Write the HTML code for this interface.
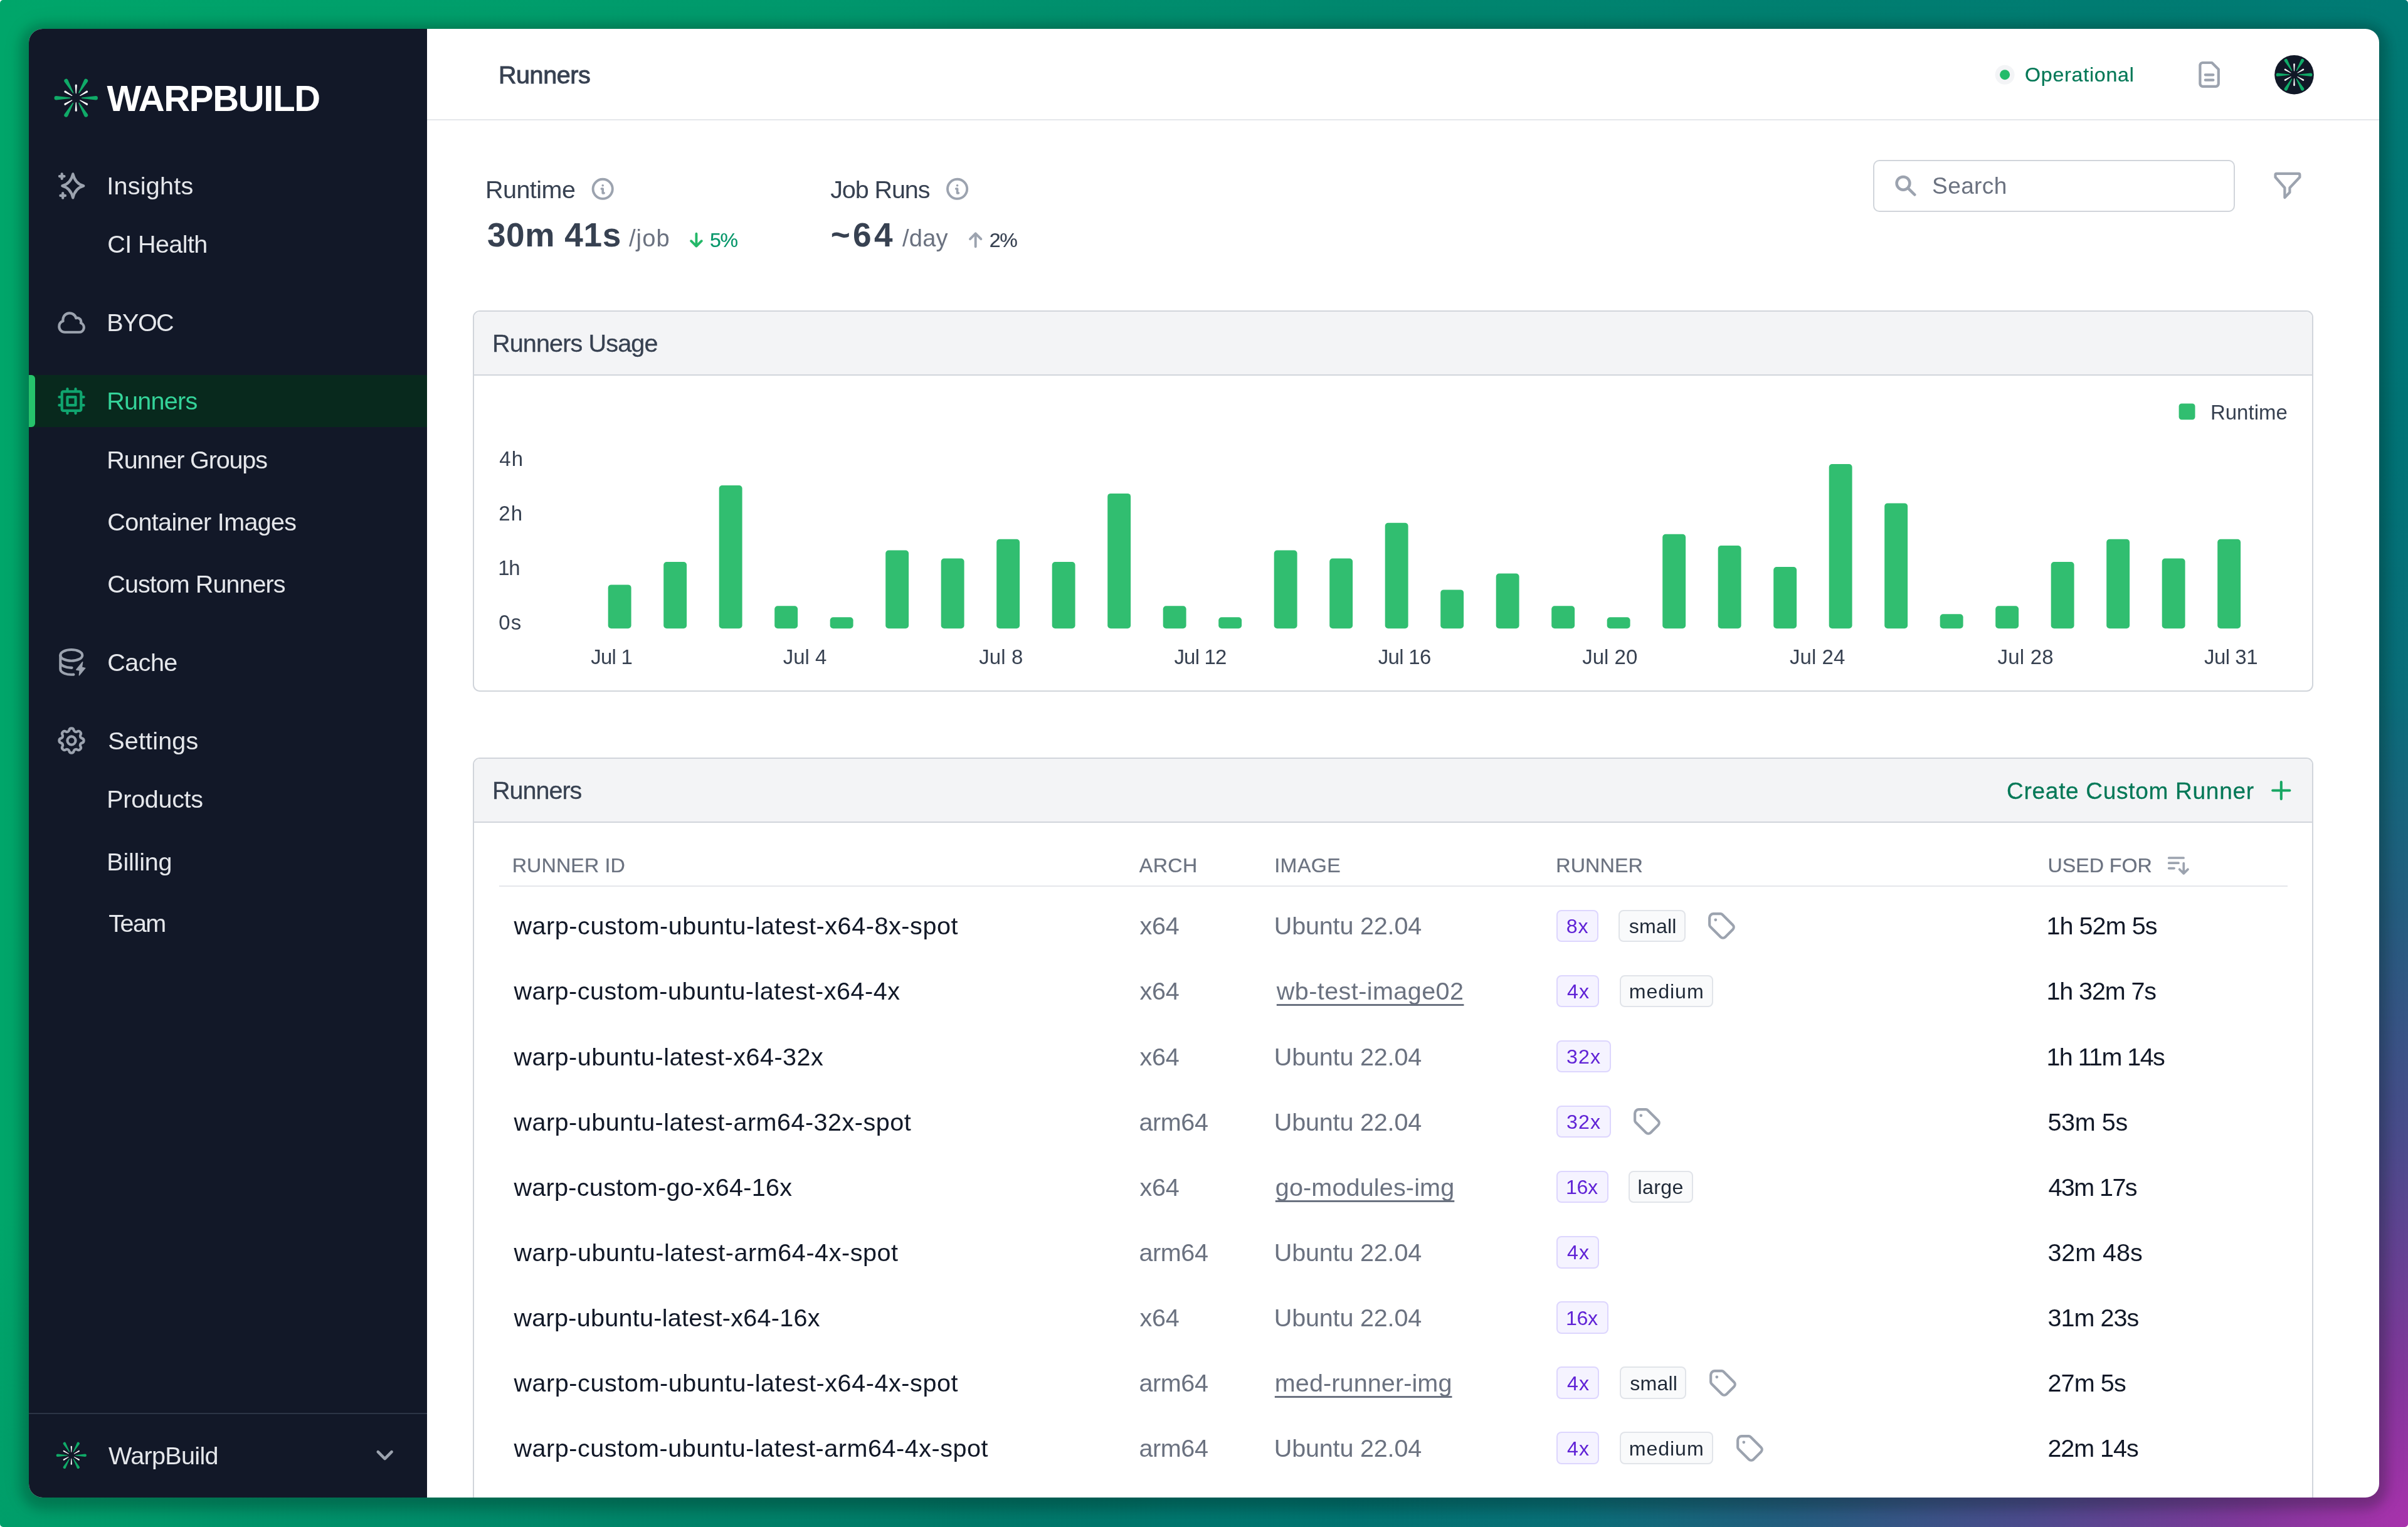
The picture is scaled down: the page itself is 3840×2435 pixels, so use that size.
<!DOCTYPE html>
<html lang="en"><head><meta charset="utf-8"><title>WarpBuild – Runners</title>
<style>
html,body{margin:0;padding:0}
html{width:3840px;height:2435px;overflow:hidden;background:#fff}
body{width:3840px;height:2435px;position:relative;overflow:hidden;font-family:"Liberation Sans",sans-serif;background:#fff}
#bgd{position:absolute;left:0;top:0;width:3840px;height:2435px;border-radius:5px;background:
radial-gradient(2400px circle at 100% 100%, #a832ac 0px, rgb(130,55,155) 243px, rgb(75,75,140) 609px, rgba(40,90,128,.92) 974px, rgba(15,103,125,.62) 1344px, rgba(0,105,120,.35) 1800px, rgba(0,110,118,0) 2400px),
radial-gradient(1900px 1000px ellipse at 40% 104%, rgba(0,100,100,.6) 0%, rgba(0,108,102,.38) 45%, rgba(0,120,105,0) 100%),
linear-gradient(to right,#00a66a 0%,#009a6c 30%,#00886e 55%,#007d71 80%,#007a74 100%);}
.a{position:absolute}
.t{position:absolute;white-space:nowrap;margin:0;padding:0}
#win{position:absolute;left:46px;top:46px;width:3748px;height:2342px;border-radius:22px;overflow:hidden;background:#fff;
box-shadow:0 6px 16px 13px rgba(0,25,20,.2),0 4px 40px 4px rgba(0,25,20,.12)}
#pg{position:absolute;left:-46px;top:-46px;width:3840px;height:2435px;will-change:transform}
#side{left:46px;top:46px;width:635px;height:2342px;background:#121828}
#act{left:46px;top:598px;width:635px;height:82.7px;background:#08291d}
#bar{left:46px;top:598px;width:10.4px;height:82.7px;background:#26c36b;border-radius:0 6px 6px 0}
#sep{left:46px;top:2253px;width:635px;height:2.4px;background:#2b3445}
#hdr{left:681px;top:189.8px;width:3113px;height:2.2px;background:#e5e7eb}
.card{border:2.4px solid #d1d5db;border-radius:11px;box-sizing:border-box;background:#fff;overflow:hidden}
.ch{position:absolute;left:0;top:0;right:0;height:99.4px;background:#f3f4f6;border-bottom:2.4px solid #d1d5db}
#c1{left:754.4px;top:495.2px;width:2934.4px;height:607.6px}
#c2{left:754.4px;top:1208.4px;width:2934.4px;height:1300px}
#srch{left:2987.2px;top:254.9px;width:577.2px;height:82.8px;border:2.4px solid #d1d5db;border-radius:10px;box-sizing:border-box}
#thl{left:795.8px;top:1412px;width:2852px;height:2px;background:#e5e7eb}
.bd{height:51.5px;border-radius:8px;box-sizing:border-box;border:2.2px solid}
.bp{background:#f5f3ff;border-color:#ddd6fe}
.bg{background:#f9fafb;border-color:#e1e4e9}
svg{overflow:visible}
.ic{fill:none;stroke:#9ca3af;stroke-linecap:round;stroke-linejoin:round}
</style></head>
<body>
<svg width="0" height="0" style="position:absolute"><defs>
<g id="tag" fill="none" stroke="#9ca3af" stroke-width="1.95" stroke-linecap="round" stroke-linejoin="round"><circle cx="7.5" cy="7.5" r=".6" fill="#9ca3af" stroke-width="1"/><path d="M3 6v5.172a2 2 0 0 0 .586 1.414l7.71 7.71a2.41 2.41 0 0 0 3.408 0l5.592 -5.592a2.41 2.41 0 0 0 0 -3.408l-7.71 -7.71a2 2 0 0 0 -1.414 -.586h-5.172a3 3 0 0 0 -3 3z"/></g>
<g id="logo"><path transform="rotate(0)" fill="#10aa68" d="M9.5 -0.8L31.50 -3.2A3.2 3.2 0 0 1 31.50 3.2L9.5 0.8A0.8 0.8 0 0 1 9.5 -0.8Z"/><path transform="rotate(60)" fill="#10aa68" d="M9.5 -0.8L31.50 -3.2A3.2 3.2 0 0 1 31.50 3.2L9.5 0.8A0.8 0.8 0 0 1 9.5 -0.8Z"/><path transform="rotate(120)" fill="#10aa68" d="M9.5 -0.8L31.50 -3.2A3.2 3.2 0 0 1 31.50 3.2L9.5 0.8A0.8 0.8 0 0 1 9.5 -0.8Z"/><path transform="rotate(180)" fill="#10aa68" d="M9.5 -0.8L31.50 -3.2A3.2 3.2 0 0 1 31.50 3.2L9.5 0.8A0.8 0.8 0 0 1 9.5 -0.8Z"/><path transform="rotate(240)" fill="#10aa68" d="M9.5 -0.8L31.50 -3.2A3.2 3.2 0 0 1 31.50 3.2L9.5 0.8A0.8 0.8 0 0 1 9.5 -0.8Z"/><path transform="rotate(300)" fill="#10aa68" d="M9.5 -0.8L31.50 -3.2A3.2 3.2 0 0 1 31.50 3.2L9.5 0.8A0.8 0.8 0 0 1 9.5 -0.8Z"/><path transform="rotate(30)" fill="#ffffff" d="M7.5 -0.6L20.00 -1.6A1.6 1.6 0 0 1 20.00 1.6L7.5 0.6A0.6 0.6 0 0 1 7.5 -0.6Z"/><path transform="rotate(90)" fill="#ffffff" d="M7.5 -0.6L20.00 -1.6A1.6 1.6 0 0 1 20.00 1.6L7.5 0.6A0.6 0.6 0 0 1 7.5 -0.6Z"/><path transform="rotate(150)" fill="#ffffff" d="M7.5 -0.6L20.00 -1.6A1.6 1.6 0 0 1 20.00 1.6L7.5 0.6A0.6 0.6 0 0 1 7.5 -0.6Z"/><path transform="rotate(210)" fill="#ffffff" d="M7.5 -0.6L20.00 -1.6A1.6 1.6 0 0 1 20.00 1.6L7.5 0.6A0.6 0.6 0 0 1 7.5 -0.6Z"/><path transform="rotate(270)" fill="#ffffff" d="M7.5 -0.6L20.00 -1.6A1.6 1.6 0 0 1 20.00 1.6L7.5 0.6A0.6 0.6 0 0 1 7.5 -0.6Z"/><path transform="rotate(330)" fill="#ffffff" d="M7.5 -0.6L20.00 -1.6A1.6 1.6 0 0 1 20.00 1.6L7.5 0.6A0.6 0.6 0 0 1 7.5 -0.6Z"/></g>
<g id="info" fill="none" stroke="#9ca3af" stroke-width="3.9" stroke-linecap="round" stroke-linejoin="round"><circle cx="0" cy="0" r="15.6"/><path d="M0 -5.6h.02M-1.9 -.3h1.9v6.9h1.9" stroke-width="3.6"/></g>
</defs></svg>
<div id="bgd"></div>
<div id="win"><div id="pg">
<div class="a" id="side"></div>
<div class="a" id="act"></div><div class="a" id="bar"></div>
<div class="a" id="sep"></div>
<div class="a" id="hdr"></div>
<div class="a card" id="c1"><div class="ch"></div></div>
<div class="a card" id="c2"><div class="ch"></div></div>
<div class="a" id="srch"></div>
<div class="a" id="thl"></div>
<svg class="a" style="left:0;top:0" width="3840" height="1110" viewBox="0 0 3840 1110"><g fill="#31be70"><rect x="969.7" y="932.4" width="36.9" height="69.8" rx="5"/><rect x="1058.2" y="896.1" width="36.9" height="106.1" rx="5"/><rect x="1146.7" y="774.0" width="36.9" height="228.2" rx="5"/><rect x="1235.2" y="966.3" width="36.9" height="35.9" rx="5"/><rect x="1323.7" y="984.3" width="36.9" height="17.9" rx="5"/><rect x="1412.2" y="877.6" width="36.9" height="124.6" rx="5"/><rect x="1500.7" y="890.6" width="36.9" height="111.6" rx="5"/><rect x="1589.2" y="859.7" width="36.9" height="142.5" rx="5"/><rect x="1677.7" y="896.1" width="36.9" height="106.1" rx="5"/><rect x="1766.2" y="786.9" width="36.9" height="215.3" rx="5"/><rect x="1854.7" y="966.3" width="36.9" height="35.9" rx="5"/><rect x="1943.2" y="984.3" width="36.9" height="17.9" rx="5"/><rect x="2031.7" y="877.6" width="36.9" height="124.6" rx="5"/><rect x="2120.2" y="890.6" width="36.9" height="111.6" rx="5"/><rect x="2208.7" y="833.8" width="36.9" height="168.4" rx="5"/><rect x="2297.2" y="940.4" width="36.9" height="61.8" rx="5"/><rect x="2385.7" y="914.5" width="36.9" height="87.7" rx="5"/><rect x="2474.2" y="966.3" width="36.9" height="35.9" rx="5"/><rect x="2562.7" y="984.3" width="36.9" height="17.9" rx="5"/><rect x="2651.2" y="851.7" width="36.9" height="150.5" rx="5"/><rect x="2739.7" y="870.1" width="36.9" height="132.1" rx="5"/><rect x="2828.2" y="904.0" width="36.9" height="98.2" rx="5"/><rect x="2916.7" y="740.1" width="36.9" height="262.1" rx="5"/><rect x="3005.2" y="802.4" width="36.9" height="199.8" rx="5"/><rect x="3093.7" y="979.3" width="36.9" height="22.9" rx="5"/><rect x="3182.2" y="966.3" width="36.9" height="35.9" rx="5"/><rect x="3270.7" y="896.1" width="36.9" height="106.1" rx="5"/><rect x="3359.2" y="859.7" width="36.9" height="142.5" rx="5"/><rect x="3447.7" y="890.6" width="36.9" height="111.6" rx="5"/><rect x="3536.2" y="859.7" width="36.9" height="142.5" rx="5"/></g></svg>
<svg class="a" style="left:0;top:0" width="3840" height="2435" viewBox="0 0 3840 2435">
<!-- logo -->
<g transform="translate(121.25 156.2)"><use href="#logo"/></g>
<g transform="translate(113.8 2320.8) scale(.696)"><use href="#logo"/></g>
<circle cx="3658.5" cy="119.2" r="31.3" fill="#111827"/>
<g transform="translate(3658.5 119.2) scale(.833)"><use href="#logo"/></g>
<!-- sparkles -->
<g class="ic" stroke-width="4.2" transform="translate(116.3 296.4)"><path d="M0 -19Q3.6 -3.6 17 0Q3.6 3.6 0 19Q-3.6 3.6 -17 0Q-3.6 -3.6 0 -19Z"/><path d="M-17.6 -19.1v7.6M-21.4 -15.3h7.6M-16.1 11.7v7.6M-19.9 15.5h7.6"/></g>
<!-- cloud -->
<g class="ic" stroke-width="2.07" transform="translate(89.74 490.29) scale(2.025)"><path d="M2.25 15a4.5 4.5 0 0 0 4.5 4.5H18a3.75 3.75 0 0 0 1.332-7.257 3 3 0 0 0-3.758-3.848 5.25 5.25 0 0 0-10.233 2.33A4.502 4.502 0 0 0 2.25 15Z"/></g>
<!-- cpu -->
<g class="ic" style="stroke:#10a56f" stroke-width="1.93" transform="translate(87.84 613.44) scale(2.18)"><path d="M5 6a1 1 0 0 1 1 -1h12a1 1 0 0 1 1 1v12a1 1 0 0 1 -1 1h-12a1 1 0 0 1 -1 -1zM9 9h6v6h-6zM3 9h2M3 15h2M9 3v2M15 3v2M21 9h-2M21 15h-2M15 21v-2M9 21v-2"/></g>
<!-- cache -->
<g class="ic" stroke-width="4.1"><ellipse cx="113.8" cy="1044.9" rx="17.5" ry="8.85"/><path d="M96.3 1044.9V1067A17.5 8.8 0 0 0 117.4 1075.6M96.3 1056A17.5 8.9 0 0 0 114.6 1064.9"/><path d="M131.7 1055.6L121.7 1068L127.2 1069L126.3 1076.9L135.8 1065.4L130.4 1064.2Z" fill="#9ca3af" stroke-width="1.4"/></g>
<!-- settings -->
<g class="ic" stroke-width="1.93" transform="translate(87.84 1154.84) scale(2.18)"><path d="M10.325 4.317c.426 -1.756 2.924 -1.756 3.35 0a1.724 1.724 0 0 0 2.573 1.066c1.543 -.94 3.31 .826 2.37 2.37a1.724 1.724 0 0 0 1.065 2.572c1.756 .426 1.756 2.924 0 3.35a1.724 1.724 0 0 0 -1.066 2.573c.94 1.543 -.826 3.31 -2.37 2.37a1.724 1.724 0 0 0 -2.572 1.065c-.426 1.756 -2.924 1.756 -3.35 0a1.724 1.724 0 0 0 -2.573 -1.066c-1.543 .94 -3.31 -.826 -2.37 -2.37a1.724 1.724 0 0 0 -1.065 -2.572c-1.756 -.426 -1.756 -2.924 0 -3.35a1.724 1.724 0 0 0 1.066 -2.573c-.94 -1.543 .826 -3.31 2.37 -2.37c1 .608 2.296 .07 2.572 -1.065z"/><circle cx="12" cy="12" r="3"/></g>
<!-- chevron -->
<path class="ic" stroke-width="4.6" d="M602.8 2315.2l10.9 10.9l10.9 -10.9"/>
<!-- status -->
<circle cx="3197.1" cy="119.2" r="15.5" fill="#f3f4f6"/><circle cx="3197.1" cy="119.2" r="8" fill="#23bb6a"/>
<!-- doc -->
<g class="ic" stroke-width="2" transform="translate(3497.9 93.7) scale(2.1)"><path d="M14 3H7a2 2 0 0 0 -2 2v14a2 2 0 0 0 2 2h10a2 2 0 0 0 2 -2V8zM9 12.2h6M9 16.2h6"/></g>
<!-- info -->
<g transform="translate(961.2 301.3)"><use href="#info"/></g>
<g transform="translate(1526.6 301.3)"><use href="#info"/></g>
<!-- arrows -->
<path fill="none" stroke="#25b869" stroke-width="3.9" stroke-linecap="round" stroke-linejoin="round" d="M1110.45 372.8v19.7M1102.1 384.2l8.35 8.35l8.35 -8.35"/>
<path fill="none" stroke="#9ca3af" stroke-width="3.9" stroke-linecap="round" stroke-linejoin="round" d="M1555.7 393.3v-20.9M1547.0 381.1l8.7 -8.7l8.7 8.7"/>
<!-- search -->
<g class="ic" stroke-width="4.5"><circle cx="3035" cy="292.3" r="10.4"/><path d="M3043 300.3l10.3 10.2"/></g>
<!-- filter -->
<path class="ic" stroke-width="4.2" d="M3630.5 276.9h34.9a2 2 0 0 1 2 2v3.6l-16 17v7.2l-8 8.3v-15.5l-14.9 -17v-3.6a2 2 0 0 1 2 -2z"/>
<!-- legend -->
<rect x="3474.6" y="643.4" width="25.9" height="25.9" rx="4.5" fill="#31be70"/>
<!-- plus -->
<path fill="none" stroke="#17a663" stroke-width="4.1" stroke-linecap="round" d="M3637.8 1247v27.1M3624.2 1260.5h27.2"/>
<!-- sort -->
<g class="ic" stroke-width="3.7"><path d="M3458.7 1368h23.4M3458.7 1376.2h15.3M3458.7 1384.6h8.4M3482.3 1376.5v15.5M3475.6 1386.2l6.7 6.7l6.7 -6.7"/></g>
</svg>
<div class="a bd bp" style="left:2482.4px;top:1450.5px;width:66.5px"></div>
<div class="a bd bg" style="left:2581.3px;top:1450.5px;width:106.3px"></div>
<svg class="a" style="left:2724.3px;top:1454.8px" width="42.9" height="42.9" viewBox="2 2 20 20"><use href="#tag"/></svg>
<div class="a bd bp" style="left:2482.4px;top:1554.6px;width:68.1px"></div>
<div class="a bd bg" style="left:2582.9px;top:1554.6px;width:149.0px"></div>
<div class="a bd bp" style="left:2482.4px;top:1658.8px;width:86.2px"></div>
<div class="a bd bp" style="left:2482.4px;top:1762.8px;width:86.2px"></div>
<svg class="a" style="left:2605.3px;top:1767.1px" width="42.9" height="42.9" viewBox="2 2 20 20"><use href="#tag"/></svg>
<div class="a bd bp" style="left:2482.4px;top:1866.9px;width:82.2px"></div>
<div class="a bd bg" style="left:2597.0px;top:1866.9px;width:103.0px"></div>
<div class="a bd bp" style="left:2482.4px;top:1971.0px;width:68.1px"></div>
<div class="a bd bp" style="left:2482.4px;top:2075.1px;width:82.2px"></div>
<div class="a bd bp" style="left:2482.4px;top:2179.2px;width:68.1px"></div>
<div class="a bd bg" style="left:2582.9px;top:2179.2px;width:106.3px"></div>
<svg class="a" style="left:2725.9px;top:2183.6px" width="42.9" height="42.9" viewBox="2 2 20 20"><use href="#tag"/></svg>
<div class="a bd bp" style="left:2482.4px;top:2283.3px;width:68.1px"></div>
<div class="a bd bg" style="left:2582.9px;top:2283.3px;width:149.0px"></div>
<svg class="a" style="left:2768.6px;top:2287.7px" width="42.9" height="42.9" viewBox="2 2 20 20"><use href="#tag"/></svg>
<div class="t" style="left:170.4px;top:119.8px;font-size:57.99px;line-height:75px;color:#ffffff;letter-spacing:-1.29px;font-weight:700;">WARPBUILD</div>
<div class="t" style="left:170.3px;top:271.2px;font-size:39.55px;line-height:51px;color:#e5e7eb;letter-spacing:0.24px;">Insights</div>
<div class="t" style="left:171.3px;top:363.9px;font-size:39.55px;line-height:51px;color:#e5e7eb;letter-spacing:-0.61px;">CI Health</div>
<div class="t" style="left:170.3px;top:488.8px;font-size:39.55px;line-height:51px;color:#e5e7eb;letter-spacing:-1.58px;">BYOC</div>
<div class="t" style="left:170.3px;top:613.9px;font-size:39.55px;line-height:51px;color:#34d399;letter-spacing:-0.75px;">Runners</div>
<div class="t" style="left:170.3px;top:708.0px;font-size:39.55px;line-height:51px;color:#e5e7eb;letter-spacing:-1.14px;">Runner Groups</div>
<div class="t" style="left:171.3px;top:807.4px;font-size:39.55px;line-height:51px;color:#e5e7eb;letter-spacing:-0.69px;">Container Images</div>
<div class="t" style="left:171.3px;top:906.1px;font-size:39.55px;line-height:51px;color:#e5e7eb;letter-spacing:-0.96px;">Custom Runners</div>
<div class="t" style="left:171.3px;top:1030.7px;font-size:39.55px;line-height:51px;color:#e5e7eb;letter-spacing:-0.58px;">Cache</div>
<div class="t" style="left:172.3px;top:1155.8px;font-size:39.55px;line-height:51px;color:#e5e7eb;letter-spacing:0.15px;">Settings</div>
<div class="t" style="left:170.3px;top:1249.3px;font-size:39.55px;line-height:51px;color:#e5e7eb;letter-spacing:-0.33px;">Products</div>
<div class="t" style="left:170.3px;top:1348.6px;font-size:39.55px;line-height:51px;color:#e5e7eb;letter-spacing:-0.22px;">Billing</div>
<div class="t" style="left:173.3px;top:1447.0px;font-size:39.55px;line-height:51px;color:#e5e7eb;letter-spacing:-1.58px;">Team</div>
<div class="t" style="left:173.0px;top:2295.8px;font-size:39.55px;line-height:51px;color:#e5e7eb;letter-spacing:-0.68px;">WarpBuild</div>
<div class="t" style="left:795.0px;top:93.9px;font-size:39.55px;line-height:51px;color:#374151;letter-spacing:-0.47px;-webkit-text-stroke:0.95px #374151;">Runners</div>
<div class="t" style="left:3229.0px;top:98.2px;font-size:32.14px;line-height:42px;color:#047857;letter-spacing:0.78px;-webkit-text-stroke:0.22px #047857;">Operational</div>
<div class="t" style="left:773.9px;top:276.6px;font-size:39.55px;line-height:51px;color:#374151;letter-spacing:-0.53px;">Runtime</div>
<div class="t" style="left:776.9px;top:340.1px;font-size:53.15px;line-height:69px;color:#374151;letter-spacing:0.59px;font-weight:700;">30m 41s</div>
<div class="t" style="left:1002.9px;top:354.8px;font-size:38.11px;line-height:50px;color:#6b7280;letter-spacing:1.12px;">/job</div>
<div class="t" style="left:1132.0px;top:361.5px;font-size:32.14px;line-height:42px;color:#059669;letter-spacing:-1.29px;-webkit-text-stroke:0.22px #059669;">5%</div>
<div class="t" style="left:1324.2px;top:276.6px;font-size:39.55px;line-height:51px;color:#374151;letter-spacing:-1.11px;">Job Runs</div>
<div class="t" style="left:1324.7px;top:340.1px;font-size:53.15px;line-height:69px;color:#374151;letter-spacing:4.31px;font-weight:700;">~64</div>
<div class="t" style="left:1438.9px;top:354.8px;font-size:38.11px;line-height:50px;color:#6b7280;letter-spacing:0.24px;">/day</div>
<div class="t" style="left:1577.8px;top:361.5px;font-size:32.14px;line-height:42px;color:#374151;letter-spacing:-1.29px;-webkit-text-stroke:0.22px #374151;">2%</div>
<div class="t" style="left:3081.1px;top:272.4px;font-size:37.08px;line-height:48px;color:#6b7280;letter-spacing:0.35px;">Search</div>
<div class="t" style="left:785.0px;top:521.6px;font-size:39.55px;line-height:51px;color:#374151;letter-spacing:-0.86px;-webkit-text-stroke:0.28px #374151;">Runners Usage</div>
<div class="t" style="left:3524.9px;top:635.9px;font-size:32.96px;line-height:43px;color:#374151;letter-spacing:0.04px;">Runtime</div>
<div class="t" style="left:796.3px;top:710.2px;font-size:32.96px;line-height:43px;color:#374151;letter-spacing:1.07px;">4h</div>
<div class="t" style="left:795.3px;top:796.9px;font-size:32.96px;line-height:43px;color:#374151;letter-spacing:1.17px;">2h</div>
<div class="t" style="left:794.3px;top:884.1px;font-size:32.96px;line-height:43px;color:#374151;letter-spacing:-1.32px;">1h</div>
<div class="t" style="left:795.3px;top:971.3px;font-size:32.96px;line-height:43px;color:#374151;letter-spacing:1.17px;">0s</div>
<div class="t" style="left:942.3px;top:1025.9px;font-size:32.96px;line-height:43px;color:#374151;letter-spacing:-0.75px;">Jul 1</div>
<div class="t" style="left:1248.8px;top:1025.9px;font-size:32.96px;line-height:43px;color:#374151;letter-spacing:-0.02px;">Jul 4</div>
<div class="t" style="left:1561.2px;top:1025.9px;font-size:32.96px;line-height:43px;color:#374151;letter-spacing:0.13px;">Jul 8</div>
<div class="t" style="left:1872.4px;top:1025.9px;font-size:32.96px;line-height:43px;color:#374151;letter-spacing:-0.78px;">Jul 12</div>
<div class="t" style="left:2197.8px;top:1025.9px;font-size:32.96px;line-height:43px;color:#374151;letter-spacing:-0.68px;">Jul 16</div>
<div class="t" style="left:2523.2px;top:1025.9px;font-size:32.96px;line-height:43px;color:#374151;letter-spacing:0.02px;">Jul 20</div>
<div class="t" style="left:2854.1px;top:1025.9px;font-size:32.96px;line-height:43px;color:#374151;letter-spacing:0.04px;">Jul 24</div>
<div class="t" style="left:3185.5px;top:1025.9px;font-size:32.96px;line-height:43px;color:#374151;letter-spacing:0.22px;">Jul 28</div>
<div class="t" style="left:3514.9px;top:1025.9px;font-size:32.96px;line-height:43px;color:#374151;letter-spacing:-0.46px;">Jul 31</div>
<div class="t" style="left:785.0px;top:1235.4px;font-size:39.55px;line-height:51px;color:#374151;letter-spacing:-1.03px;-webkit-text-stroke:0.28px #374151;">Runners</div>
<div class="t" style="left:3200.1px;top:1237.0px;font-size:37.08px;line-height:48px;color:#047857;letter-spacing:0.67px;-webkit-text-stroke:0.26px #047857;">Create Custom Runner</div>
<div class="t" style="left:816.7px;top:1359.2px;font-size:32.24px;line-height:42px;color:#6b7280;letter-spacing:0.14px;-webkit-text-stroke:0.23px #6b7280;">RUNNER ID</div>
<div class="t" style="left:1816.8px;top:1359.2px;font-size:32.24px;line-height:42px;color:#6b7280;letter-spacing:0.35px;-webkit-text-stroke:0.23px #6b7280;">ARCH</div>
<div class="t" style="left:2032.2px;top:1359.2px;font-size:32.24px;line-height:42px;color:#6b7280;letter-spacing:0.45px;-webkit-text-stroke:0.23px #6b7280;">IMAGE</div>
<div class="t" style="left:2481.2px;top:1359.2px;font-size:32.24px;line-height:42px;color:#6b7280;letter-spacing:0.16px;-webkit-text-stroke:0.23px #6b7280;">RUNNER</div>
<div class="t" style="left:3265.5px;top:1359.2px;font-size:32.24px;line-height:42px;color:#6b7280;letter-spacing:-0.03px;-webkit-text-stroke:0.23px #6b7280;">USED FOR</div>
<div class="t" style="left:819.4px;top:1451.3px;font-size:39.55px;line-height:51px;color:#111827;letter-spacing:0.56px;">warp-custom-ubuntu-latest-x64-8x-spot</div>
<div class="t" style="left:1817.4px;top:1451.3px;font-size:39.55px;line-height:51px;color:#6b7280;letter-spacing:-0.23px;">x64</div>
<div class="t" style="left:2031.8px;top:1451.3px;font-size:39.55px;line-height:51px;color:#6b7280;letter-spacing:-0.19px;">Ubuntu 22.04</div>
<div class="t" style="left:3263.4px;top:1451.3px;font-size:39.55px;line-height:51px;color:#111827;letter-spacing:-0.94px;">1h 52m 5s</div>
<div class="t" style="left:2497.8px;top:1455.9px;font-size:32.14px;line-height:42px;color:#6023d6;letter-spacing:0.73px;">8x</div>
<div class="t" style="left:2597.8px;top:1455.9px;font-size:32.14px;line-height:42px;color:#1f2937;letter-spacing:0.14px;">small</div>
<div class="t" style="left:819.4px;top:1555.4px;font-size:39.55px;line-height:51px;color:#111827;letter-spacing:0.50px;">warp-custom-ubuntu-latest-x64-4x</div>
<div class="t" style="left:1817.4px;top:1555.4px;font-size:39.55px;line-height:51px;color:#6b7280;letter-spacing:-0.23px;">x64</div>
<div class="t" style="left:2035.8px;top:1555.4px;font-size:39.55px;line-height:51px;color:#6b7280;letter-spacing:0.42px;text-decoration:underline;text-decoration-thickness:3px;text-underline-offset:7px;text-decoration-skip-ink:none;">wb-test-image02</div>
<div class="t" style="left:3263.4px;top:1555.4px;font-size:39.55px;line-height:51px;color:#111827;letter-spacing:-1.12px;">1h 32m 7s</div>
<div class="t" style="left:2499.0px;top:1560.0px;font-size:32.14px;line-height:42px;color:#6023d6;letter-spacing:1.13px;">4x</div>
<div class="t" style="left:2597.8px;top:1560.0px;font-size:32.14px;line-height:42px;color:#1f2937;letter-spacing:0.92px;">medium</div>
<div class="t" style="left:819.4px;top:1659.5px;font-size:39.55px;line-height:51px;color:#111827;letter-spacing:0.48px;">warp-ubuntu-latest-x64-32x</div>
<div class="t" style="left:1817.4px;top:1659.5px;font-size:39.55px;line-height:51px;color:#6b7280;letter-spacing:-0.23px;">x64</div>
<div class="t" style="left:2031.8px;top:1659.5px;font-size:39.55px;line-height:51px;color:#6b7280;letter-spacing:-0.19px;">Ubuntu 22.04</div>
<div class="t" style="left:3263.4px;top:1659.5px;font-size:39.55px;line-height:51px;color:#111827;letter-spacing:-1.58px;">1h 11m 14s</div>
<div class="t" style="left:2498.0px;top:1664.1px;font-size:32.14px;line-height:42px;color:#6023d6;letter-spacing:1.13px;">32x</div>
<div class="t" style="left:819.4px;top:1763.6px;font-size:39.55px;line-height:51px;color:#111827;letter-spacing:0.49px;">warp-ubuntu-latest-arm64-32x-spot</div>
<div class="t" style="left:1816.4px;top:1763.6px;font-size:39.55px;line-height:51px;color:#6b7280;letter-spacing:-0.38px;">arm64</div>
<div class="t" style="left:2031.8px;top:1763.6px;font-size:39.55px;line-height:51px;color:#6b7280;letter-spacing:-0.19px;">Ubuntu 22.04</div>
<div class="t" style="left:3265.4px;top:1763.6px;font-size:39.55px;line-height:51px;color:#111827;letter-spacing:-0.36px;">53m 5s</div>
<div class="t" style="left:2498.0px;top:1768.2px;font-size:32.14px;line-height:42px;color:#6023d6;letter-spacing:1.13px;">32x</div>
<div class="t" style="left:819.4px;top:1867.7px;font-size:39.55px;line-height:51px;color:#111827;letter-spacing:0.30px;">warp-custom-go-x64-16x</div>
<div class="t" style="left:1817.4px;top:1867.7px;font-size:39.55px;line-height:51px;color:#6b7280;letter-spacing:-0.23px;">x64</div>
<div class="t" style="left:2033.8px;top:1867.7px;font-size:39.55px;line-height:51px;color:#6b7280;letter-spacing:0.14px;text-decoration:underline;text-decoration-thickness:3px;text-underline-offset:7px;text-decoration-skip-ink:none;">go-modules-img</div>
<div class="t" style="left:3266.4px;top:1867.7px;font-size:39.55px;line-height:51px;color:#111827;letter-spacing:-1.58px;">43m 17s</div>
<div class="t" style="left:2497.0px;top:1872.3px;font-size:32.14px;line-height:42px;color:#6023d6;letter-spacing:-0.37px;">16x</div>
<div class="t" style="left:2611.5px;top:1872.3px;font-size:32.14px;line-height:42px;color:#1f2937;letter-spacing:0.36px;">large</div>
<div class="t" style="left:819.4px;top:1971.8px;font-size:39.55px;line-height:51px;color:#111827;letter-spacing:0.55px;">warp-ubuntu-latest-arm64-4x-spot</div>
<div class="t" style="left:1816.4px;top:1971.8px;font-size:39.55px;line-height:51px;color:#6b7280;letter-spacing:-0.38px;">arm64</div>
<div class="t" style="left:2031.8px;top:1971.8px;font-size:39.55px;line-height:51px;color:#6b7280;letter-spacing:-0.19px;">Ubuntu 22.04</div>
<div class="t" style="left:3265.4px;top:1971.8px;font-size:39.55px;line-height:51px;color:#111827;letter-spacing:-0.05px;">32m 48s</div>
<div class="t" style="left:2499.0px;top:1976.4px;font-size:32.14px;line-height:42px;color:#6023d6;letter-spacing:1.13px;">4x</div>
<div class="t" style="left:819.4px;top:2075.9px;font-size:39.55px;line-height:51px;color:#111827;letter-spacing:0.27px;">warp-ubuntu-latest-x64-16x</div>
<div class="t" style="left:1817.4px;top:2075.9px;font-size:39.55px;line-height:51px;color:#6b7280;letter-spacing:-0.23px;">x64</div>
<div class="t" style="left:2031.8px;top:2075.9px;font-size:39.55px;line-height:51px;color:#6b7280;letter-spacing:-0.19px;">Ubuntu 22.04</div>
<div class="t" style="left:3265.4px;top:2075.9px;font-size:39.55px;line-height:51px;color:#111827;letter-spacing:-0.98px;">31m 23s</div>
<div class="t" style="left:2497.0px;top:2080.5px;font-size:32.14px;line-height:42px;color:#6023d6;letter-spacing:-0.37px;">16x</div>
<div class="t" style="left:819.4px;top:2180.0px;font-size:39.55px;line-height:51px;color:#111827;letter-spacing:0.56px;">warp-custom-ubuntu-latest-x64-4x-spot</div>
<div class="t" style="left:1816.4px;top:2180.0px;font-size:39.55px;line-height:51px;color:#6b7280;letter-spacing:-0.38px;">arm64</div>
<div class="t" style="left:2032.8px;top:2180.0px;font-size:39.55px;line-height:51px;color:#6b7280;letter-spacing:0.10px;text-decoration:underline;text-decoration-thickness:3px;text-underline-offset:7px;text-decoration-skip-ink:none;">med-runner-img</div>
<div class="t" style="left:3265.4px;top:2180.0px;font-size:39.55px;line-height:51px;color:#111827;letter-spacing:-0.86px;">27m 5s</div>
<div class="t" style="left:2499.0px;top:2184.6px;font-size:32.14px;line-height:42px;color:#6023d6;letter-spacing:1.13px;">4x</div>
<div class="t" style="left:2599.3px;top:2184.6px;font-size:32.14px;line-height:42px;color:#1f2937;letter-spacing:0.14px;">small</div>
<div class="t" style="left:819.4px;top:2284.1px;font-size:39.55px;line-height:51px;color:#111827;letter-spacing:0.52px;">warp-custom-ubuntu-latest-arm64-4x-spot</div>
<div class="t" style="left:1816.4px;top:2284.1px;font-size:39.55px;line-height:51px;color:#6b7280;letter-spacing:-0.38px;">arm64</div>
<div class="t" style="left:2031.8px;top:2284.1px;font-size:39.55px;line-height:51px;color:#6b7280;letter-spacing:-0.19px;">Ubuntu 22.04</div>
<div class="t" style="left:3265.4px;top:2284.1px;font-size:39.55px;line-height:51px;color:#111827;letter-spacing:-1.05px;">22m 14s</div>
<div class="t" style="left:2499.0px;top:2288.7px;font-size:32.14px;line-height:42px;color:#6023d6;letter-spacing:1.13px;">4x</div>
<div class="t" style="left:2597.8px;top:2288.7px;font-size:32.14px;line-height:42px;color:#1f2937;letter-spacing:0.92px;">medium</div>
</div></div>
</body></html>
